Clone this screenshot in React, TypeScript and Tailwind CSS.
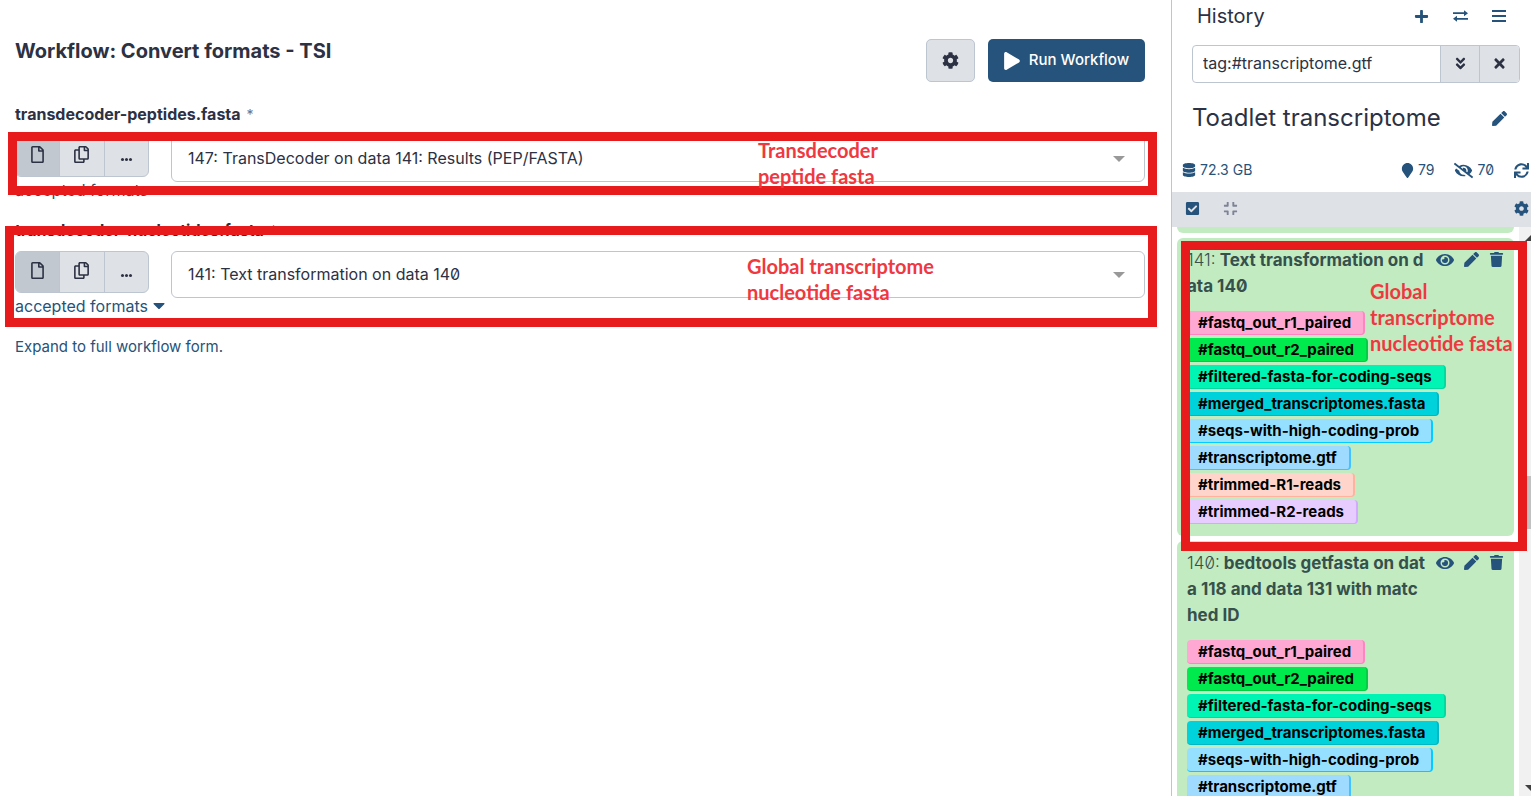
import type { ReactNode } from 'react';
import {
  FaAngleDoubleDown,
  FaCheckSquare,
  FaCog,
  FaCompress,
  FaDatabase,
  FaEye,
  FaEyeSlash,
  FaMapMarker,
  FaPen,
  FaPlay,
  FaPlus,
  FaRegCopy,
  FaRegFile,
  FaSync,
  FaTimes,
  FaTrash,
} from 'react-icons/fa';

const TAGS = [
  { name: '#fastq_out_r1_paired', style: 'bg-[#ffa8d3] border-[#ff85c2]' },
  { name: '#fastq_out_r2_paired', style: 'bg-[#00ea4e] border-[#00cf45]' },
  { name: '#filtered-fasta-for-coding-seqs', style: 'bg-[#00f5b4] border-[#00d9a0]' },
  { name: '#merged_transcriptomes.fasta', style: 'bg-[#00d2db] border-[#00b8c4]' },
  { name: '#seqs-with-high-coding-prob', style: 'bg-[#96e0ff] border-[#00ccff]' },
  { name: '#transcriptome.gtf', style: 'bg-[#9edbff] border-[#42c3ff]' },
  { name: '#trimmed-R1-reads', style: 'bg-[#ffd5cb] border-[#ffb39e]' },
  { name: '#trimmed-R2-reads', style: 'bg-[#e6ccff] border-[#d3a8ff]' },
];

function Note({ className, children }: { className: string; children: ReactNode }) {
  return (
    <p
      className={`pointer-events-none absolute z-20 whitespace-pre-line font-['Lato',sans-serif] text-[20px] font-bold leading-[26px] text-[#ef3840] ${className}`}
    >
      {children}
    </p>
  );
}

function Highlight({ className }: { className: string }) {
  return <div className={`pointer-events-none absolute z-10 border-9 border-[#e71b1b] ${className}`} />;
}

function DataField({ id, label, value, children }: { id: string; label: string; value: string; children: ReactNode }) {
  return (
    <div className="relative">
      <label htmlFor={id} className="block leading-6">
        <span className="font-bold">{label}</span>
        <span className="ml-[6px] text-sm text-[#6b7285]">*</span>
      </label>
      <div className="mt-[9px] flex gap-[22px]">
        <div className="w-[134px] shrink-0">
          <div className="flex h-[42px] divide-x divide-[#bdc6d0] overflow-hidden rounded-md border border-[#bdc6d0] bg-[#dee1e6]">
            <button type="button" aria-label="Single dataset" className="flex flex-1 justify-center bg-[#c1c8d0] pt-[10px]">
              <FaRegFile className="size-[17px]" />
            </button>
            <button type="button" aria-label="Multiple datasets" className="flex flex-1 justify-center pt-[10px]">
              <FaRegCopy className="size-[17px]" />
            </button>
            <button type="button" aria-label="More options" className="flex flex-1 items-center justify-center gap-[1px] pt-[6px]">
              <span className="size-[3px] rounded-full bg-current" />
              <span className="size-[3px] rounded-full bg-current" />
              <span className="size-[3px] rounded-full bg-current" />
            </button>
          </div>
          <button
            type="button"
            className="flex items-center gap-[5px] whitespace-nowrap pt-px text-base leading-6 text-[#25537b]"
          >
            accepted formats
            <svg viewBox="0 0 12 6" className="h-[6px] w-3 shrink-0 fill-current">
              <path d="M1 0h10l.7.8L6.7 5.7a1 1 0 0 1-1.4 0L.3.8z" />
            </svg>
          </button>
        </div>
        <div className="relative h-[47px] min-w-0 flex-1">
          <select
            id={id}
            className="h-full w-full appearance-none rounded-md border border-[#bdc6d0] bg-white pb-[2px] pl-4 pr-10"
          >
            <option>{value}</option>
          </select>
          <svg viewBox="0 0 12 6" className="pointer-events-none absolute right-5 top-[21px] h-[6px] w-3 fill-[#999]">
            <path d="M0 0h12L6 6z" />
          </svg>
        </div>
      </div>
      {children}
    </div>
  );
}

function Dataset({ hid, lines, children }: { hid: number; lines: string[]; children?: ReactNode }) {
  return (
    <article className="relative rounded-md bg-[#c2ebc2] pb-3 pl-[10px] pr-[10px] pt-[9px]">
      <div className="flex items-start justify-between">
        <h3 className="text-[17px] font-bold leading-[26px] text-[#36504c]">
          {lines.map((line, i) => (
            <span key={line} className="flex gap-1">
              {i === 0 && <span className="font-light">{hid}:</span>}
              <span>{line}</span>
            </span>
          ))}
        </h3>
        <div className="flex h-[25px] items-center gap-[10px] text-[#25537b]">
          <button type="button" aria-label="Display"><FaEye className="size-[18px]" /></button>
          <button type="button" aria-label="Edit"><FaPen className="size-[15px]" /></button>
          <button type="button" aria-label="Delete"><FaTrash className="size-[15px]" /></button>
        </div>
      </div>
      <ul className="mt-3 flex flex-col items-start gap-[3px]">
        {TAGS.map((t) => (
          <li key={t.name}>
            <a
              href="#tag"
              className={`block h-6 rounded-[4px] border-b border-r-2 pl-[11px] pr-3 text-[15px] font-bold leading-[23px] text-black ${t.style}`}
            >
              {t.name}
            </a>
          </li>
        ))}
      </ul>
      {children}
    </article>
  );
}

export default function App() {
  return (
    <div className="flex h-screen overflow-hidden bg-white font-['Inter','Liberation_Sans',sans-serif] text-base slashed-zero text-[#2c3143]">
      <main className="min-w-0 flex-1 pl-[15px] pr-[26px] pt-[39px]">
        <header className="flex justify-between">
          <h1 className="text-xl font-bold leading-6">Workflow: Convert formats - TSI</h1>
          <div className="flex h-[43px] gap-[13px]">
            <button
              type="button"
              aria-label="Workflow settings"
              className="flex w-[49px] items-center justify-center rounded-[5px] border border-[#bdc6d0] bg-[#dee1e6]"
            >
              <FaCog className="size-[17px]" />
            </button>
            <button
              type="button"
              className="flex w-[157px] items-center justify-center gap-[9px] rounded-[5px] bg-[#25537b] text-[15px] font-medium text-white"
            >
              <FaPlay className="h-[18px] w-[16px]" /> Run Workflow
            </button>
          </div>
        </header>

        <form className="mt-5 flex flex-col gap-4">
          <DataField
            id="peptides"
            label="transdecoder-peptides.fasta"
            value="147: TransDecoder on data 141: Results (PEP/FASTA)"
          >
            <Highlight className="-left-[7px] -right-[12px] bottom-[7px] top-[30px]" />
            <Note className="left-[743px] top-[35px]">{'Transdecoder\npeptide fasta'}</Note>
          </DataField>
          <DataField id="nucleotides" label="transdecoder-nucleotides.fasta" value="141: Text transformation on data 140">
            <Highlight className="-bottom-[9px] -left-[10px] -right-[12px] top-2" />
            <Note className="left-[732px] top-[35px]">{'Global transcriptome\nnucleotide fasta'}</Note>
          </DataField>
          <a href="#expand" className="pt-px text-[15px] leading-6 text-[#25537b]">
            Expand to full workflow form.
          </a>
        </form>
      </main>

      <aside className="flex w-[360px] shrink-0 flex-col border-l border-[#bdc6d0]">
        <div className="flex h-8 items-center justify-between pl-[25px] pr-[25px]">
          <h2 className="text-xl">History</h2>
          <div className="flex items-center gap-6 text-[#25537b]">
            <button type="button" aria-label="Create new history"><FaPlus className="size-[15px]" /></button>
            <button type="button" aria-label="Switch history">
              <svg viewBox="0 0 15 12" className="h-3 w-[15px] fill-none stroke-current">
                <path d="M0 3.2h12M15 8.8H3" strokeWidth="1.8" />
                <path d="M11 .2l4 3-4 3zM4 5.8L0 8.8l4 3z" className="fill-current stroke-none" />
              </svg>
            </button>
            <button type="button" aria-label="History options">
              <svg viewBox="0 0 14 12" className="h-3 w-[14px] fill-current">
                <path d="M0 0h14v2H0zM0 5h14v2H0zM0 10h14v2H0z" />
              </svg>
            </button>
          </div>
        </div>

        <div className="ml-5 mr-[11px] mt-[13px] flex h-[38px] divide-x divide-[#bdc6d0] overflow-hidden rounded-[4px] border border-[#bdc6d0]">
          <input
            type="text"
            aria-label="Search datasets"
            defaultValue="tag:#transcriptome.gtf"
            className="min-w-0 flex-1 px-[10px] pb-[2px] outline-none"
          />
          <button type="button" aria-label="Advanced filters" className="flex w-[39px] items-center justify-center bg-[#dee1e6] pb-[2px]">
            <FaAngleDoubleDown className="size-[15px]" />
          </button>
          <button type="button" aria-label="Clear filters" className="flex w-[39px] items-center justify-center bg-[#dee1e6] pb-[2px]">
            <FaTimes className="size-[15px]" />
          </button>
        </div>

        <div className="mt-[19px] flex h-8 items-center justify-between pl-5 pr-6">
          <h2 className="text-2xl">Toadlet transcriptome</h2>
          <button type="button" aria-label="Rename history" className="text-[#25537b]"><FaPen className="size-[15px]" /></button>
        </div>

        <div className="mt-[26px] flex h-5 items-center justify-between pl-[10px] pr-[2px] text-sm text-[#25537b]">
          <button type="button" className="flex items-center gap-1"><FaDatabase className="size-[14px]" /> 72.3 GB</button>
          <div className="flex items-center gap-5">
            <button type="button" className="flex items-center gap-[3px]"><FaMapMarker className="size-[15px]" /> 79</button>
            <button type="button" className="flex items-center gap-1"><FaEyeSlash className="size-[19px]" /> 70</button>
            <button type="button" aria-label="Refresh"><FaSync className="size-[15px]" /></button>
          </div>
        </div>

        <div className="mt-3 flex h-[35px] shrink-0 items-center bg-[#dee1e6] pb-[2px] pl-[13px] pr-[2px] text-[#25537b]">
          <button type="button" aria-label="Select items"><FaCheckSquare className="size-[15px]" /></button>
          <button type="button" aria-label="Collapse items" className="ml-[23px] text-[#7d8294]"><FaCompress className="size-[15px]" /></button>
          <button type="button" aria-label="History settings" className="ml-auto"><FaCog className="size-[15px]" /></button>
        </div>

        <div className="flex min-h-0 flex-1 overflow-hidden">
          <div className="flex min-w-0 flex-1 flex-col gap-[5px] pl-[5px] pr-[5px]">
            <div className="h-[6px] shrink-0 rounded-b-md bg-[#c2ebc2]" />
            <Dataset hid={141} lines={['Text transformation on d', 'ata 140']}>
              <Highlight className="-bottom-[15px] -right-[13px] left-1 top-[3px]" />
              <Note className="left-[193px] top-10">{'Global\ntranscriptome\nnucleotide fasta'}</Note>
            </Dataset>
            <Dataset hid={140} lines={['bedtools getfasta on dat', 'a 118 and data 131 with matc', 'hed ID']} />
          </div>
          <div className="flex w-3 shrink-0 flex-col items-end bg-[#f1f1f1] pb-[5px] pt-2">
            <svg viewBox="0 0 6 6" className="size-[6px] shrink-0 fill-[#404040]"><path d="M0 6L6 0v6z" /></svg>
            <div className="mt-[235px] h-[53px] w-[10px] shrink-0 bg-[#c1c1c1]" />
            <svg viewBox="0 0 6 6" className="mt-auto size-[6px] shrink-0 fill-[#404040]"><path d="M0 0h6v6z" /></svg>
          </div>
        </div>
      </aside>
    </div>
  );
}
